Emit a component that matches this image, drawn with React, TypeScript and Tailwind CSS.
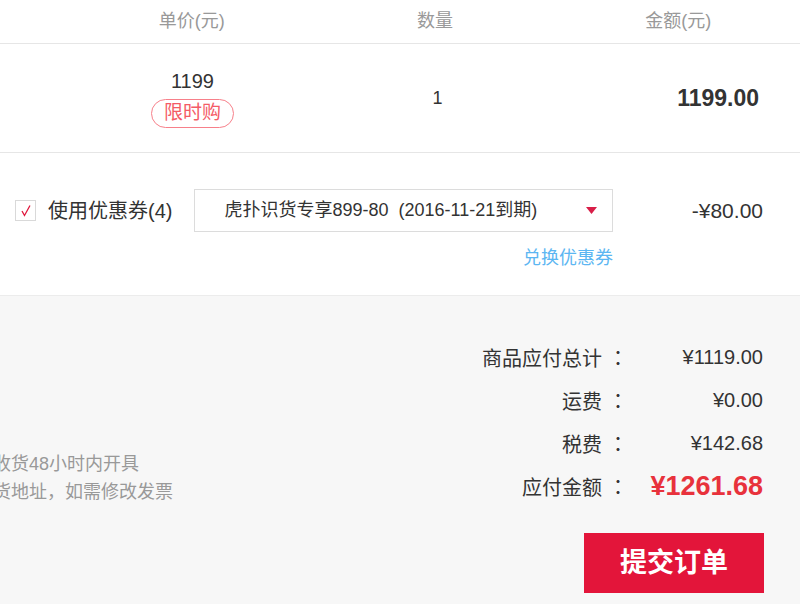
const font = { fontFamily: '"Liberation Sans", "Noto Sans CJK SC", sans-serif' };
const colonFont = { fontFamily: '"Noto Sans CJK TC", sans-serif' };

const summary = [
  { label: "商品应付总计", value: "¥1119.00" },
  { label: "运费", value: "¥0.00" },
  { label: "税费", value: "¥142.68" },
];

const Label = ({ text }: { text: string }) => (
  <div className="h-[43px] whitespace-nowrap text-right text-[20px] leading-[43px]">
    {text}
    <span className="inline-block translate-x-[6px]" style={colonFont}>
      ：
    </span>
  </div>
);

const App = () => {
  return (
    <div className="w-[800px] h-[604px] overflow-hidden bg-white text-[#333]" style={font}>
      {/* header */}
      <div className="flex h-[44px] items-center border-b border-[#e6e6e6] pl-[70px] text-[18px] text-[#999]">
        <div className="w-[245px] text-center">单价(元)</div>
        <div className="w-[245px] text-center">数量</div>
        <div className="w-[245px] text-center">金额(元)</div>
      </div>

      {/* product row */}
      <div className="flex h-[109px] items-center border-b border-[#e6e6e6] pl-[70px]">
        <div className="flex w-[245px] flex-col items-center">
          <div className="text-[20px] leading-[24px]">1199</div>
          <div className="mt-[6px] flex h-[29px] w-[83px] items-center justify-center rounded-full border-[1.5px] border-[#f7808a] text-[19px] text-[#f45b66]">
            限时购
          </div>
        </div>
        <div className="w-[245px] text-center text-[18px]">1</div>
        <div className="flex-1 pr-[41px] text-right text-[23px] font-bold">1199.00</div>
      </div>

      {/* coupon */}
      <div className="pt-[36px] pb-[25px]">
        <div className="flex h-[43px] items-center">
          <div className="ml-[15px] flex h-[21px] w-[21px] items-center justify-center border border-[#d9d9d9] bg-white">
            <svg width="14" height="14" viewBox="0 0 14 14">
              <path d="M3 7 L5.5 11.5 L11 1.5" fill="none" stroke="#e0163c" strokeWidth="1.3" />
            </svg>
          </div>
          <div className="ml-[12px] text-[20px]">使用优惠券(4)</div>
          <div className="ml-[22px] flex h-[43px] w-[419px] items-center justify-between border border-[#dcdcdc] pl-[29px] pr-[15px] text-[18px]">
            <span>虎扑识货专享899-80&nbsp;&nbsp;(2016-11-21到期)</span>
            <svg width="11" height="7" viewBox="0 0 11 7">
              <path d="M0 0 H11 L5.5 7 Z" fill="#d81e48" />
            </svg>
          </div>
          <div className="flex-1 pr-[37px] text-right text-[21px]">-¥80.00</div>
        </div>
        <div className="mt-[14px] ml-[194px] w-[419px] text-right text-[18px] leading-[24px] text-[#5cb6f2]">
          兑换优惠券
        </div>
      </div>

      {/* totals */}
      <div className="flex h-[309px] justify-between overflow-hidden border-t border-[#ececec] bg-[#f7f7f7]">
        <div className="-ml-[7px] pt-[154px] text-[18px] leading-[28px] text-[#999]">
          <div>收货48小时内开具</div>
          <div>货地址，如需修改发票</div>
        </div>
        <div className="flex flex-col items-end pt-[40px] pr-[36px]">
          <div className="grid grid-cols-[auto_141px] pr-[1px]">
            {summary.map((r) => (
              <div key={r.label} className="contents">
                <Label text={r.label} />
                <div className="h-[43px] text-right text-[20px] leading-[43px]">{r.value}</div>
              </div>
            ))}
            <Label text="应付金额" />
            <div className="h-[43px] text-right text-[27px] font-bold leading-[43px] text-[#e8323c]">¥1261.68</div>
          </div>
          <button className="mt-[25px] flex h-[60px] w-[180px] items-center justify-center bg-[#e3153a] text-[27px] font-bold text-white">
            提交订单
          </button>
        </div>
      </div>
    </div>
  );
};

export default App;
